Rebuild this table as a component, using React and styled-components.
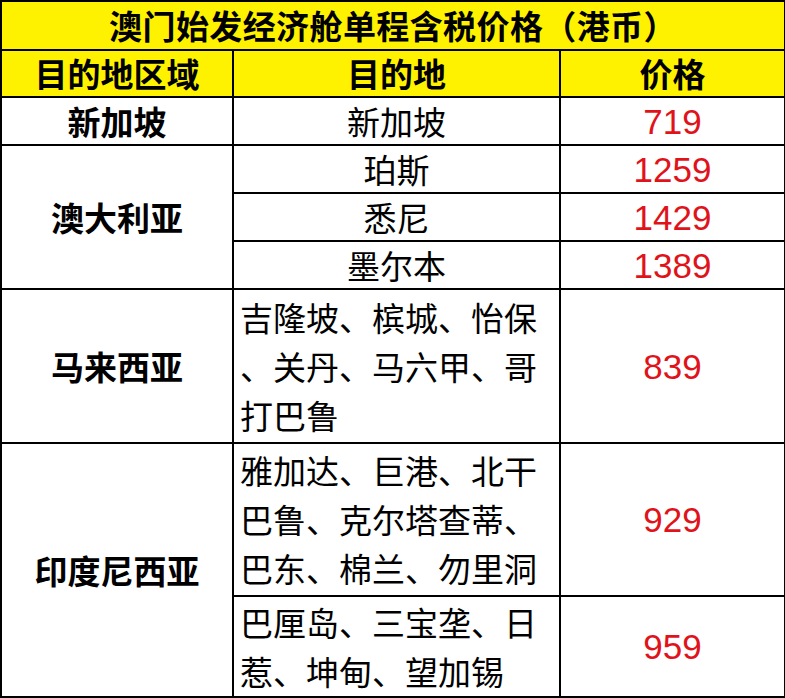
import React from "react";
import styled, { createGlobalStyle } from "styled-components";

const GlobalStyle = createGlobalStyle`
  html, body {
    margin: 0;
    padding: 0;
    background: #ffffff;
  }
  body {
    font-family: "Noto Sans CJK SC", "Noto Sans", sans-serif;
    color: #000;
  }
`;

// Price table
const Table = styled.table`
  width: 784px;
  border-collapse: collapse;
  table-layout: fixed;
`;

const Row = styled.tr`
  height: ${(p) => p.$h}px;
`;

const Title = styled.th`
  background: #fff200;
  border: 2px solid #000;
  font-size: 33px;
  font-weight: 700;
  letter-spacing: 0.4px;
  line-height: 1;
  padding: 0;
  text-align: center;
`;

const HeadCell = styled.th`
  background: #fff200;
  border: 2px solid #000;
  font-size: 33px;
  font-weight: 700;
  line-height: 1;
  padding: 0;
  text-align: center;
`;

const RegionCell = styled.td`
  border: 2px solid #000;
  font-size: 33px;
  font-weight: 700;
  line-height: 1;
  padding: 0;
  text-align: center;
  vertical-align: middle;
`;

const PlaceCell = styled.td`
  border: 2px solid #000;
  font-size: 33px;
  font-weight: 400;
  line-height: ${(p) => (p.$left ? "49px" : "1")};
  padding: ${(p) => (p.$left ? "0 0 0 6px" : "0")};
  text-align: ${(p) => (p.$left ? "left" : "center")};
  vertical-align: middle;
`;

const Line = styled.span`
  display: block;
  white-space: nowrap;
`;

const Price = styled.td`
  border: 2px solid #000;
  font-family: "Liberation Sans", Arial, sans-serif;
  font-size: 35px;
  color: #e0131b;
  line-height: 1;
  padding: 0;
  text-align: center;
  vertical-align: middle;
`;

const Places = ({ lines }) => (
  <PlaceCell $left={lines.length > 1}>
    {lines.map((l, i) => (
      <Line key={i}>{l}</Line>
    ))}
  </PlaceCell>
);

export default function App() {
  return (
    <>
      <GlobalStyle />
      <Table>
        <colgroup>
          <col style={{ width: 232 }} />
          <col style={{ width: 327 }} />
          <col style={{ width: 225 }} />
        </colgroup>
        <thead>
          <Row $h={49}>
            <Title colSpan={3}>澳门始发经济舱单程含税价格（港币）</Title>
          </Row>
          <Row $h={47}>
            <HeadCell>目的地区域</HeadCell>
            <HeadCell>目的地</HeadCell>
            <HeadCell>价格</HeadCell>
          </Row>
        </thead>
        <tbody>
          <Row $h={48}>
            <RegionCell>新加坡</RegionCell>
            <Places lines={["新加坡"]} />
            <Price>719</Price>
          </Row>
          <Row $h={48}>
            <RegionCell rowSpan={3}>澳大利亚</RegionCell>
            <Places lines={["珀斯"]} />
            <Price>1259</Price>
          </Row>
          <Row $h={48}>
            <Places lines={["悉尼"]} />
            <Price>1429</Price>
          </Row>
          <Row $h={48}>
            <Places lines={["墨尔本"]} />
            <Price>1389</Price>
          </Row>
          <Row $h={154}>
            <RegionCell>马来西亚</RegionCell>
            <Places lines={["吉隆坡、槟城、怡保", "、关丹、马六甲、哥", "打巴鲁"]} />
            <Price>839</Price>
          </Row>
          <Row $h={153}>
            <RegionCell rowSpan={2}>印度尼西亚</RegionCell>
            <Places lines={["雅加达、巨港、北干", "巴鲁、克尔塔查蒂、", "巴东、棉兰、勿里洞"]} />
            <Price>929</Price>
          </Row>
          <Row $h={101}>
            <Places lines={["巴厘岛、三宝垄、日", "惹、坤甸、望加锡"]} />
            <Price>959</Price>
          </Row>
        </tbody>
      </Table>
    </>
  );
}
